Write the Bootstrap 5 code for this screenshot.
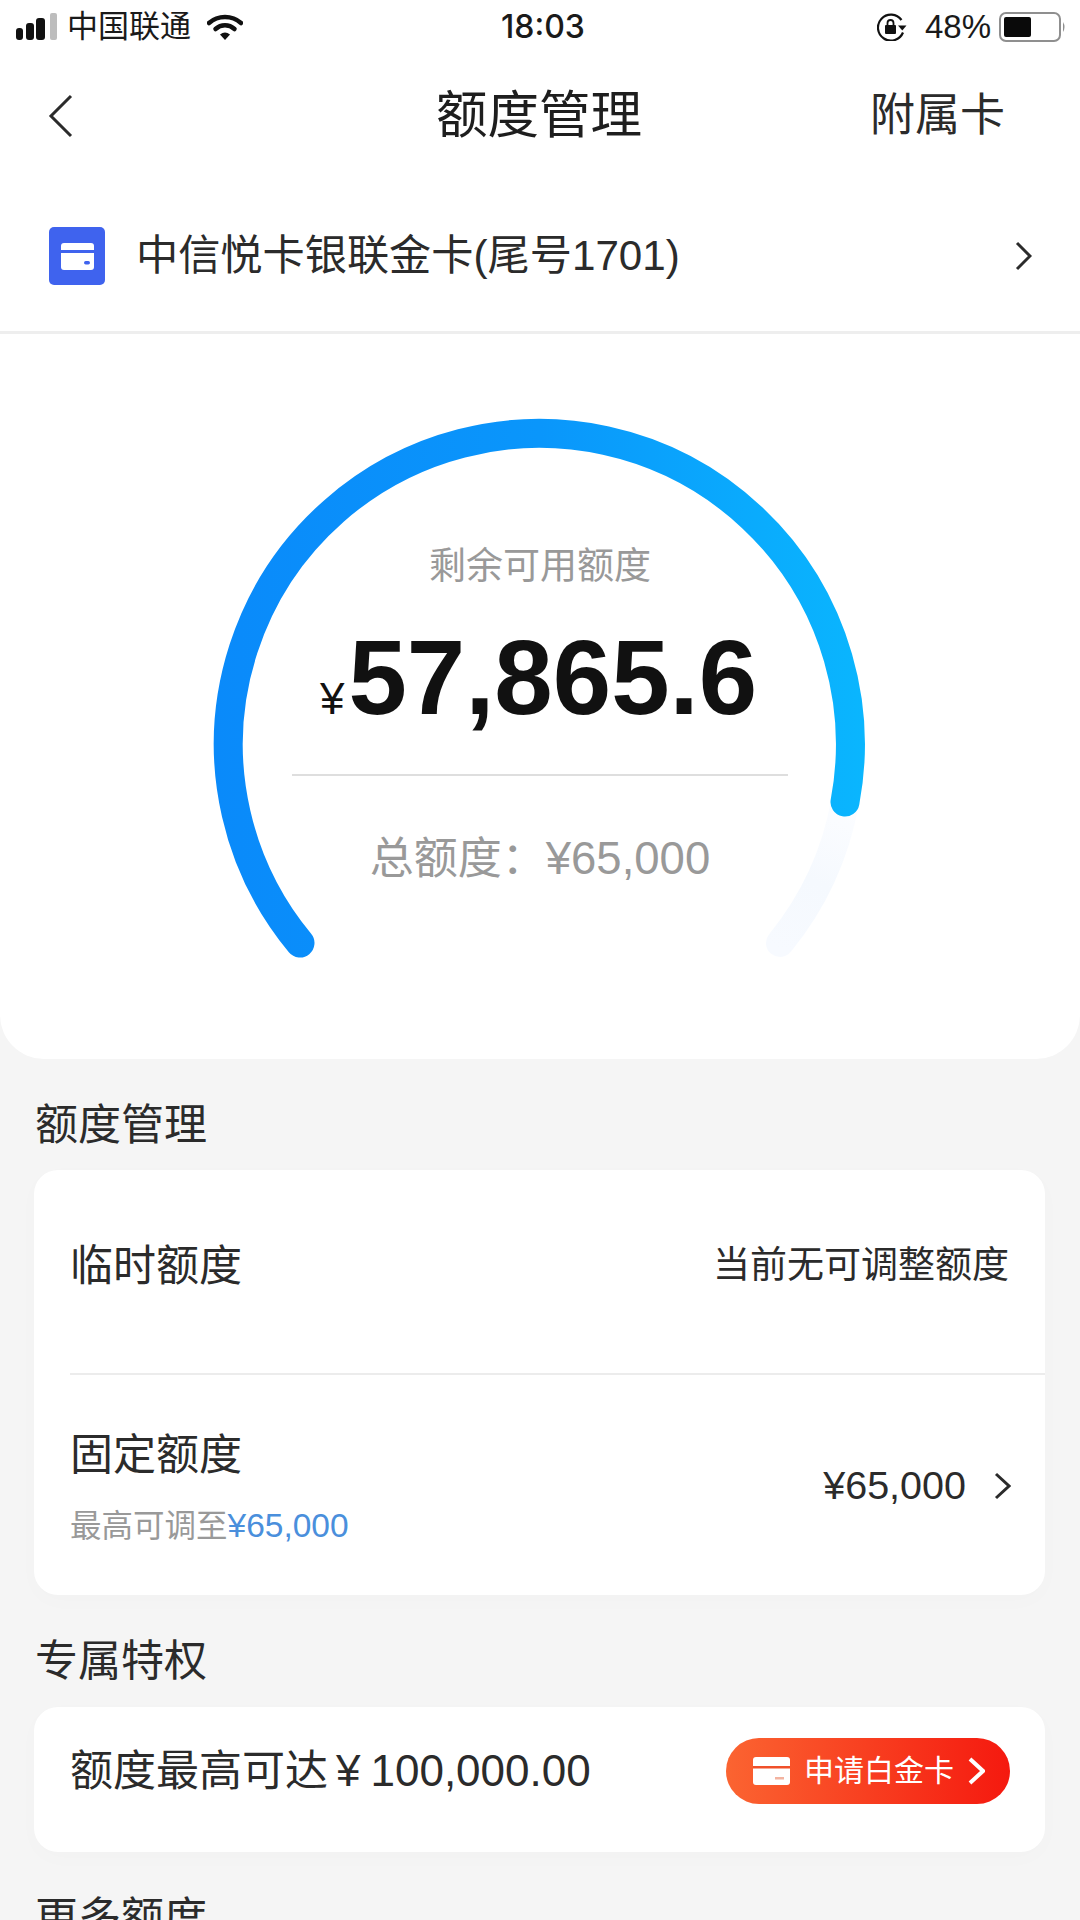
<!DOCTYPE html>
<html lang="zh-CN">
<head>
  <meta charset="UTF-8">
  <title>额度管理</title>
  <meta name="viewport" content="width=device-width, initial-scale=1">
  <link href="https://cdn.jsdelivr.net/npm/bootstrap@5.3.0/dist/css/bootstrap.min.css" rel="stylesheet">
  <style>
    html, body { height: 1920px; overflow: hidden; }
    body {
      background: #f5f5f5;
      color: #2b2b2b;
      font-family: "Liberation Sans", "Noto Sans CJK SC", sans-serif;
    }
    .top-part { background: #fff; }
    .status-bar { height: 54px; padding: 0 13px 0 16px; color: #1a1a1a; }
    .carrier { font-size: 31px; margin-left: 10px; }
    .clock {
      font-family: Inter, "Liberation Sans", sans-serif;
      font-size: 32px;
      font-weight: 500;
      position: absolute;
      left: 6px;
      right: 0;
      text-align: center;
    }
    .batt-pct { font-size: 33px; margin: 0 8px 0 18px; }
    .title-bar { height: 126px; padding: 0 75px 2px 48px; }
    .title-text { font-size: 51.500px; position: absolute; left: 0; right: 2px; text-align: center; color: #1e1e1e; }
    .extra-link { font-size: 45px; }
    .card-row { height: 154px; padding: 0 48px 0 49px; border-bottom: 3px solid #eeeeee; font-size: 42.200px; }
    .card-icon { margin-right: 31px; }
    .hero {
      background: #fff;
      height: 725px;
      border-radius: 0 0 44px 44px;
      padding-top: 211px;
    }
    .gauge-svg { position: absolute; top: 0; left: 0; }
    .hero-label { font-size: 37px; line-height: 44px; color: #999; }
    .hero-amount { font-size: 105px; line-height: 110px; font-weight: 700; color: #111; margin-top: 34px; padding-right: 3px; }
    .hero-amount span { font-size: 44px; line-height: 1; font-weight: 400; margin-right: 4px; }
    .hero-line { width: 496px; height: 2px; background: #dedede; margin: 41px auto 58px; }
    .hero-total { font-size: 44px; line-height: 50px; color: #999; }
    .hero-total span { font-size: 45.500px; line-height: 1; }
    .sec-title { font-size: 43px; line-height: 50px; padding-left: 35px; color: #2b2b2b; }
    .sec-first { margin-top: 41px; }
    .sec-next { margin-top: 41px; }
    .white-box {
      margin: 20px 35px 0 34px;
      border-radius: 24px;
      box-shadow: 0 6px 24px rgba(0, 0, 0, .015);
    }
    .sec-next + .white-box { margin-top: 21px; }
    .limit-row { padding-left: 36px; }
    .row-temp { height: 203px; padding-right: 36px; padding-bottom: 12px; }
    .row-line { height: 2px; background: #ececec; margin-left: 36px; }
    .row-fixed { height: 220px; padding-right: 34px; padding-top: 5px; }
    .row-name { font-size: 43px; line-height: 50px; }
    .row-side { font-size: 37px; }
    .row-sub { font-size: 31.500px; line-height: 38px; color: #999; margin-top: 27px; }
    .row-sub span { color: #4a8fdc; font-size: 33.500px; line-height: 1; }
    .row-money { font-size: 39.500px; margin-right: 28px; }
    .row-vip { height: 145px; padding-right: 35px; font-size: 43px; padding-bottom: 18px; }
    .vip-money { font-size: 44px; margin-left: 8px; }
    .vip-money span { margin-right: 10px; }
    .apply-btn {
      width: 284px;
      height: 66px;
      border-radius: 33px;
      background: linear-gradient(90deg, #fb6431, #f5190f);
      color: #fff;
      font-size: 30px;
      padding-left: 27px;
    }
    .btn-word { margin: 0 14px 0 14px; }
  </style>
</head>
<body>

<div class="top-part">
  <!-- status bar -->
  <div class="status-bar d-flex align-items-center position-relative">
    <svg width="41" height="28" viewBox="0 0 41 28">
      <rect x="0" y="15" width="7" height="12" rx="3" fill="#111"/>
      <rect x="10" y="10" width="8" height="17" rx="3" fill="#111"/>
      <rect x="20" y="5" width="9" height="22" rx="3" fill="#111"/>
      <rect x="34" y="0" width="7" height="27" rx="2" fill="#bdbdbd"/>
    </svg>
    <span class="carrier">中国联通</span>
    <svg class="ms-3" width="36" height="27" viewBox="0 0 36 27">
      <path d="M2 9C11 1 25 1 34 9" fill="none" stroke="#111" stroke-width="4.5" stroke-linecap="round"/>
      <path d="M8.500 15C14 10 22 10 27.500 15" fill="none" stroke="#111" stroke-width="4.500" stroke-linecap="round"/>
      <path d="M13 20.500Q18 16.500 23 20.500L18 26Z" fill="#111"/>
    </svg>
    <span class="clock">18:03</span>
    <div class="ms-auto d-flex align-items-center">
      <svg width="30" height="28" viewBox="0 0 30 28">
        <path d="M24.500 7A13 13 0 1 0 26 19.500" fill="none" stroke="#111" stroke-width="2.200"/>
        <path d="M21 12.500H29.500L25.300 17.500Z" fill="#111"/>
        <rect x="8" y="12" width="11" height="9" rx="1" fill="#111"/>
        <path d="M10.500 12V10A3 3 0 0 1 16.500 10V12" fill="none" stroke="#111" stroke-width="1.800"/>
      </svg>
      <span class="batt-pct">48%</span>
      <svg width="68" height="30" viewBox="0 0 68 30">
        <rect x="1" y="1" width="60" height="28" rx="6" fill="none" stroke="#8f8f8f" stroke-width="2"/>
        <rect x="5" y="5" width="27" height="20" rx="2" fill="#0a0a0a"/>
        <path d="M64 10Q67 15 64 20Z" fill="#8f8f8f"/>
      </svg>
    </div>
  </div>

  <!-- title bar -->
  <div class="title-bar d-flex align-items-center justify-content-between position-relative">
    <svg width="26" height="44" viewBox="0 0 26 44">
      <polyline points="23,2 3,22 23,42" fill="none" stroke="#2b2b2b" stroke-width="3"/>
    </svg>
    <span class="title-text">额度管理</span>
    <span class="extra-link">附属卡</span>
  </div>

  <!-- selected card -->
  <div class="card-row d-flex align-items-center">
    <svg class="card-icon" width="56" height="58" viewBox="0 0 56 58">
      <rect width="56" height="58" rx="5" fill="#3f63ee"/>
      <rect x="12" y="16" width="33" height="27" rx="3" fill="#fff"/>
      <rect x="12" y="23" width="33" height="3" fill="#3f63ee"/>
      <rect x="35" y="34" width="6" height="3.500" rx="1.700" fill="#3f63ee"/>
    </svg>
    <span>中信悦卡银联金卡(尾号1701)</span>
    <svg class="ms-auto" width="17" height="30" viewBox="0 0 17 30">
      <polyline points="2,2 15,15 2,28" fill="none" stroke="#2b2b2b" stroke-width="3"/>
    </svg>
  </div>
</div>

<!-- remaining credit gauge -->
<div class="hero position-relative text-center">
  <svg class="gauge-svg" width="1080" height="725" viewBox="0 334 1080 725">
    <defs>
      <linearGradient id="arcColor" gradientUnits="userSpaceOnUse" x1="214" y1="745" x2="866" y2="745">
        <stop offset="0" stop-color="#0a8afa"/>
        <stop offset="0.5" stop-color="#0a96fb"/>
        <stop offset="1" stop-color="#0ab6fe"/>
      </linearGradient>
      <linearGradient id="arcRest" gradientUnits="userSpaceOnUse" x1="845" y1="810" x2="780" y2="950">
        <stop offset="0" stop-color="#f7faff" stop-opacity="0.5"/>
        <stop offset="0.5" stop-color="#f5f9fe"/>
        <stop offset="1" stop-color="#f7faff"/>
      </linearGradient>
    </defs>
    <path d="M845 802A311 311 0 0 1 780 943" fill="none" stroke="url(#arcRest)" stroke-width="28" stroke-linecap="round"/>
    <path d="M300 943A311 311 0 1 1 845 802" fill="none" stroke="url(#arcColor)" stroke-width="29" stroke-linecap="round"/>
  </svg>
  <div class="position-relative">
    <div class="hero-label">剩余可用额度</div>
    <div class="hero-amount"><span>¥</span>57,865.6</div>
    <div class="hero-line"></div>
    <div class="hero-total">总额度&#xFF1A;<span>¥65,000</span></div>
  </div>
</div>

<div class="sec-title sec-first">额度管理</div>
<div class="card white-box border-0">
  <div class="limit-row row-temp d-flex align-items-center justify-content-between">
    <span class="row-name">临时额度</span>
    <span class="row-side">当前无可调整额度</span>
  </div>
  <div class="row-line"></div>
  <div class="limit-row row-fixed d-flex align-items-center justify-content-between">
    <div>
      <div class="row-name">固定额度</div>
      <div class="row-sub">最高可调至<span>¥65,000</span></div>
    </div>
    <div class="d-flex align-items-center mb-1">
      <span class="row-money">¥65,000</span>
      <svg width="17" height="28" viewBox="0 0 17 28">
        <polyline points="2,2 15,14 2,26" fill="none" stroke="#2b2b2b" stroke-width="3"/>
      </svg>
    </div>
  </div>
</div>

<div class="sec-title sec-next">专属特权</div>
<div class="card white-box border-0">
  <div class="limit-row row-vip d-flex align-items-center justify-content-between">
    <div>额度最高可达<span class="vip-money"><span>¥</span>100,000.00</span></div>
    <div class="apply-btn d-flex align-items-center">
      <svg width="37" height="28" viewBox="0 0 37 28">
        <rect width="37" height="28" rx="3" fill="#fff"/>
        <rect y="9" width="37" height="2.500" fill="#f0502a"/>
        <rect x="22" y="20" width="9" height="2.500" fill="#f3b3a0"/>
      </svg>
      <span class="btn-word">申请白金卡</span>
      <svg width="17" height="28" viewBox="0 0 17 28">
        <polyline points="2,2 15,14 2,26" fill="none" stroke="#fff" stroke-width="4"/>
      </svg>
    </div>
  </div>
</div>

<div class="sec-title sec-next">更多额度</div>

</body>
</html>
